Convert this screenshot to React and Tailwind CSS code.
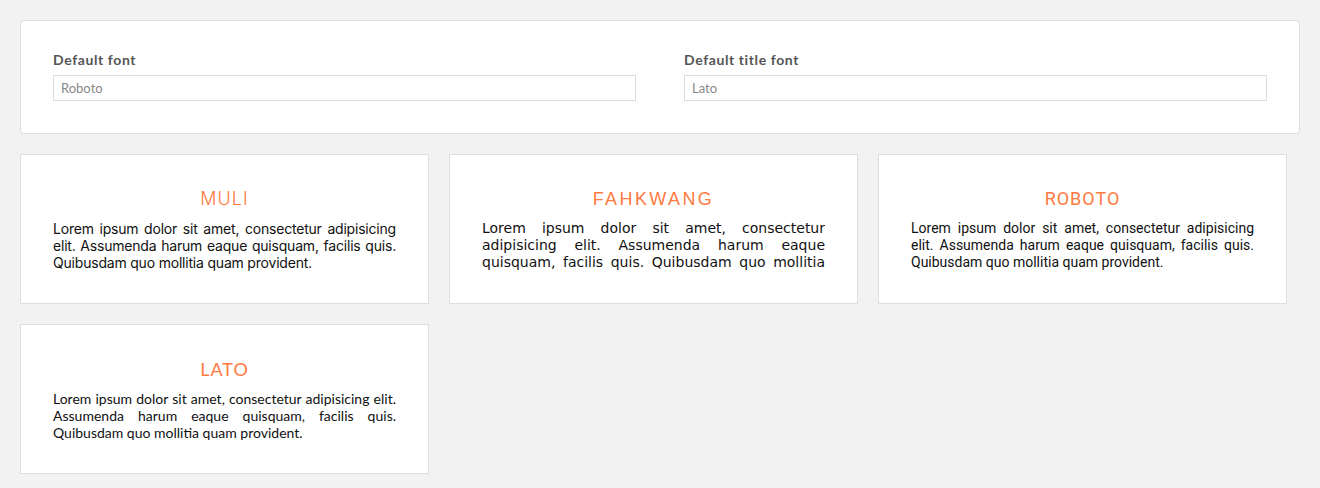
import React from 'react';

const LOREM =
  'Lorem ipsum dolor sit amet, consectetur adipisicing elit. Assumenda harum eaque quisquam, facilis quis. Quibusdam quo mollitia quam provident.';

const fonts = [
  {
    name: 'Muli',
    title: "font-['Inter',sans-serif] font-light tracking-[1px]",
    body: "font-['Inter',sans-serif] tracking-[-0.2px]",
  },
  {
    name: 'Fahkwang',
    title: "font-['Liberation_Sans',sans-serif] tracking-[2.4px]",
    body: "font-['DejaVu_Sans',sans-serif]",
  },
  {
    name: 'Roboto',
    title: "font-['Roboto',sans-serif] tracking-[1px]",
    body: "font-['Roboto',sans-serif]",
  },
  {
    name: 'Lato',
    title: "font-['Lato',sans-serif] tracking-[1px]",
    body: "font-['Lato',sans-serif]",
  },
];

const FontField = ({ label, value }) => (
  <div>
    <label className="block text-[14px] leading-[16px] tracking-[0.6px] font-bold text-[#555] mb-[7px]">{label}</label>
    <input
      readOnly
      value={value}
      className="w-full h-[26px] border border-[#dcdcdc] px-[7px] text-[13px] text-[#888] outline-none font-['Lato',sans-serif]"
    />
  </div>
);

const App = () => {
  return (
    <div className="min-h-screen bg-[#f2f2f2] p-5 font-['Lato',sans-serif]">
      <div className="bg-white border border-[#dedede] rounded-[4px] px-8 pt-[31px] pb-[32px]">
        <div className="grid grid-cols-2 gap-x-12">
          <FontField label="Default font" value="Roboto" />
          <FontField label="Default title font" value="Lato" />
        </div>
      </div>

      <div className="flex flex-wrap gap-5 mt-5">
        {fonts.map((font) => (
          <div
            key={font.name}
            className="w-[409px] h-[150px] bg-white border border-[#dedede] px-8 pt-[31px]"
          >
            <h3 className={`text-center text-[18px] leading-[26px] uppercase text-[#ff7a40] mb-[8px] ${font.title}`}>
              {font.name}
            </h3>
            <p className={`text-[14px] leading-[17px] h-[51px] overflow-hidden text-justify text-[#111] ${font.body}`}>
              {LOREM}
            </p>
          </div>
        ))}
      </div>
    </div>
  );
};

export default App;
